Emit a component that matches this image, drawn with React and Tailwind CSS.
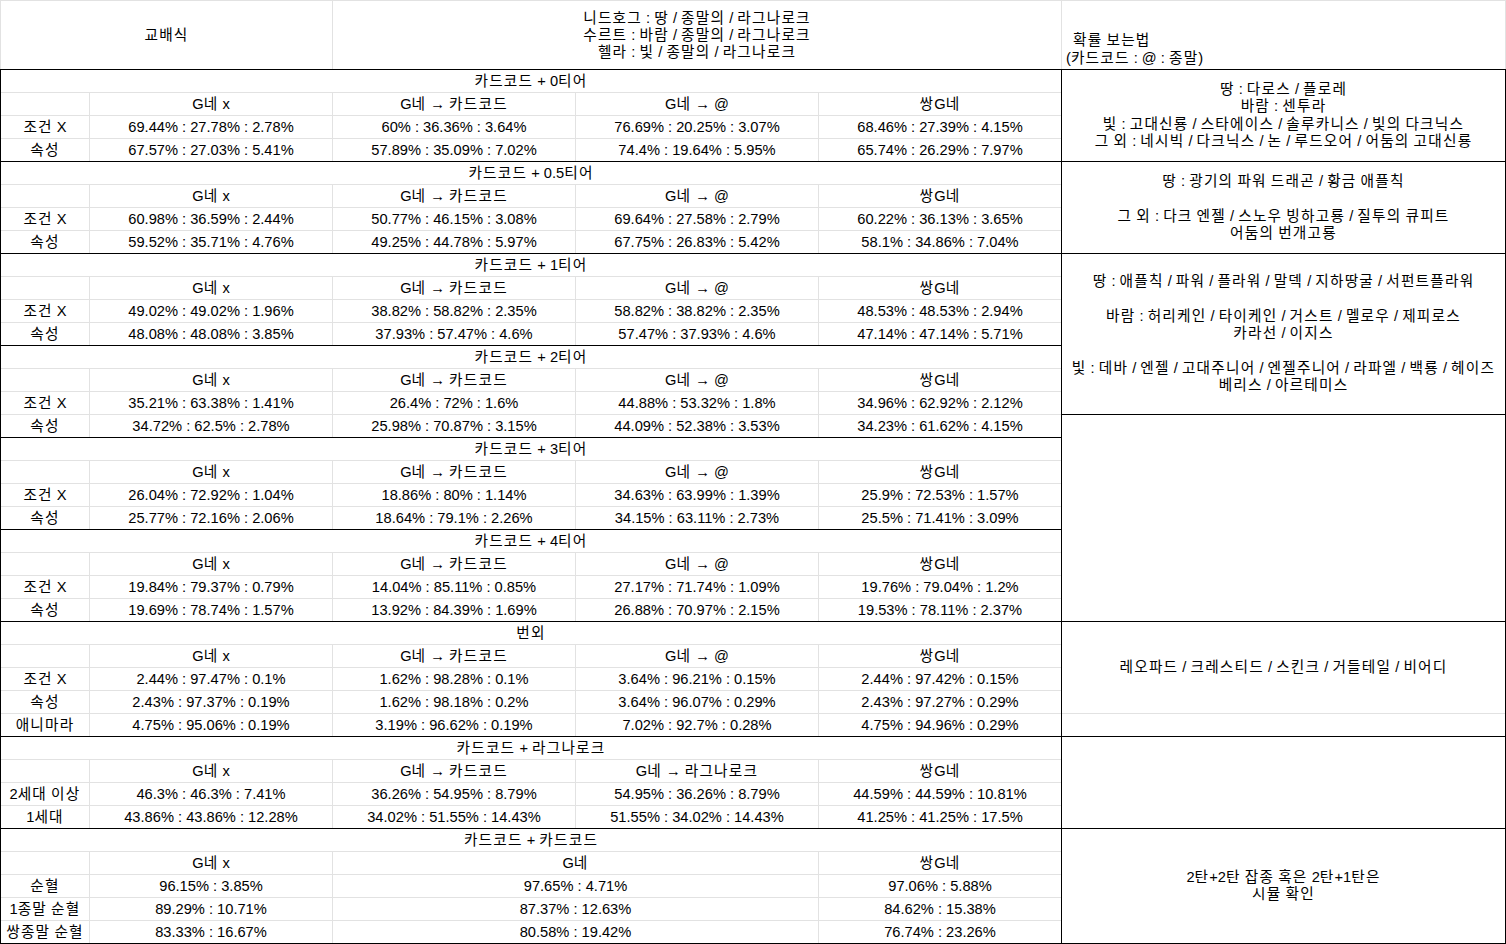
import React from "react";

const GRAY = "border-[#e2e2e2]";

function k(str) {
  if (typeof str !== "string") return str;
  const parts = str.split(/([\uAC00-\uD7A3]+)/);
  return (
    <span className="whitespace-pre">
      {parts.map((p, i) =>
        /[\uAC00-\uD7A3]/.test(p) ? (
          <span key={i} className="tracking-[1.2px]">{p}</span>
        ) : (
          <React.Fragment key={i}>{p}</React.Fragment>
        )
      )}
    </span>
  );
}

const H4 = [["G네 x", 1], ["G네 → 카드코드", 1], ["G네 → @", 1], ["쌍G네", 1]];

const sections = [
  {
    title: "카드코드 + 0티어",
    headers: H4,
    rows: [
      ["조건 X", ["69.44% : 27.78% : 2.78%", "60% : 36.36% : 3.64%", "76.69% : 20.25% : 3.07%", "68.46% : 27.39% : 4.15%"]],
      ["속성", ["67.57% : 27.03% : 5.41%", "57.89% : 35.09% : 7.02%", "74.4% : 19.64% : 5.95%", "65.74% : 26.29% : 7.97%"]],
    ],
  },
  {
    title: "카드코드 + 0.5티어",
    headers: H4,
    rows: [
      ["조건 X", ["60.98% : 36.59% : 2.44%", "50.77% : 46.15% : 3.08%", "69.64% : 27.58% : 2.79%", "60.22% : 36.13% : 3.65%"]],
      ["속성", ["59.52% : 35.71% : 4.76%", "49.25% : 44.78% : 5.97%", "67.75% : 26.83% : 5.42%", "58.1% : 34.86% : 7.04%"]],
    ],
  },
  {
    title: "카드코드 + 1티어",
    headers: H4,
    rows: [
      ["조건 X", ["49.02% : 49.02% : 1.96%", "38.82% : 58.82% : 2.35%", "58.82% : 38.82% : 2.35%", "48.53% : 48.53% : 2.94%"]],
      ["속성", ["48.08% : 48.08% : 3.85%", "37.93% : 57.47% : 4.6%", "57.47% : 37.93% : 4.6%", "47.14% : 47.14% : 5.71%"]],
    ],
  },
  {
    title: "카드코드 + 2티어",
    headers: H4,
    rows: [
      ["조건 X", ["35.21% : 63.38% : 1.41%", "26.4% : 72% : 1.6%", "44.88% : 53.32% : 1.8%", "34.96% : 62.92% : 2.12%"]],
      ["속성", ["34.72% : 62.5% : 2.78%", "25.98% : 70.87% : 3.15%", "44.09% : 52.38% : 3.53%", "34.23% : 61.62% : 4.15%"]],
    ],
  },
  {
    title: "카드코드 + 3티어",
    headers: H4,
    rows: [
      ["조건 X", ["26.04% : 72.92% : 1.04%", "18.86% : 80% : 1.14%", "34.63% : 63.99% : 1.39%", "25.9% : 72.53% : 1.57%"]],
      ["속성", ["25.77% : 72.16% : 2.06%", "18.64% : 79.1% : 2.26%", "34.15% : 63.11% : 2.73%", "25.5% : 71.41% : 3.09%"]],
    ],
  },
  {
    title: "카드코드 + 4티어",
    headers: H4,
    rows: [
      ["조건 X", ["19.84% : 79.37% : 0.79%", "14.04% : 85.11% : 0.85%", "27.17% : 71.74% : 1.09%", "19.76% : 79.04% : 1.2%"]],
      ["속성", ["19.69% : 78.74% : 1.57%", "13.92% : 84.39% : 1.69%", "26.88% : 70.97% : 2.15%", "19.53% : 78.11% : 2.37%"]],
    ],
  },
  {
    title: "번외",
    headers: H4,
    rows: [
      ["조건 X", ["2.44% : 97.47% : 0.1%", "1.62% : 98.28% : 0.1%", "3.64% : 96.21% : 0.15%", "2.44% : 97.42% : 0.15%"]],
      ["속성", ["2.43% : 97.37% : 0.19%", "1.62% : 98.18% : 0.2%", "3.64% : 96.07% : 0.29%", "2.43% : 97.27% : 0.29%"]],
      ["애니마라", ["4.75% : 95.06% : 0.19%", "3.19% : 96.62% : 0.19%", "7.02% : 92.7% : 0.28%", "4.75% : 94.96% : 0.29%"]],
    ],
  },
  {
    title: "카드코드 + 라그나로크",
    headers: [["G네 x", 1], ["G네 → 카드코드", 1], ["G네 → 라그나로크", 1], ["쌍G네", 1]],
    rows: [
      ["2세대 이상", ["46.3% : 46.3% : 7.41%", "36.26% : 54.95% : 8.79%", "54.95% : 36.26% : 8.79%", "44.59% : 44.59% : 10.81%"]],
      ["1세대", ["43.86% : 43.86% : 12.28%", "34.02% : 51.55% : 14.43%", "51.55% : 34.02% : 14.43%", "41.25% : 41.25% : 17.5%"]],
    ],
  },
  {
    title: "카드코드 + 카드코드",
    headers: [["G네 x", 1], ["G네", 2], ["쌍G네", 1]],
    spans: [1, 2, 1],
    rows: [
      ["순혈", ["96.15% : 3.85%", "97.65% : 4.71%", "97.06% : 5.88%"]],
      ["1종말 순혈", ["89.29% : 10.71%", "87.37% : 12.63%", "84.62% : 15.38%"]],
      ["쌍종말 순혈", ["83.33% : 16.67%", "80.58% : 19.42%", "76.74% : 23.26%"]],
    ],
  },
];

function Cell({ span = 1, first = false, children }) {
  const w = first ? "w-[88px]" : span === 2 ? "w-[486px] border-l" : "w-[243px] border-l";
  return (
    <div className={`${w} ${GRAY} h-full flex items-center justify-center whitespace-nowrap`}>
      {k(children)}
    </div>
  );
}

function Section({ s }) {
  const spans = s.spans || [1, 1, 1, 1];
  return (
    <div className="flex flex-col">
      <div className="h-[23px] border-t border-black flex items-center justify-center whitespace-nowrap">
        {k(s.title)}
      </div>
      <div className={`h-[23px] border-t ${GRAY} flex`}>
        <Cell first />
        {s.headers.map(([h, sp], i) => (
          <Cell key={i} span={sp}>{h}</Cell>
        ))}
      </div>
      {s.rows.map(([label, vals], r) => (
        <div key={r} className={`h-[23px] border-t ${GRAY} flex`}>
          <Cell first>{label}</Cell>
          {vals.map((v, i) => (
            <Cell key={i} span={spans[i]}>{v}</Cell>
          ))}
        </div>
      ))}
    </div>
  );
}

function RightCell({ h, top = "border-black", lines = [] }) {
  return (
    <div className={`${h} border-t ${top} flex flex-col items-center justify-center text-center leading-[17.3px] whitespace-nowrap`}>
      {lines.map((l, i) => (
        <div key={i}>{l ? k(l) : "\u00a0"}</div>
      ))}
    </div>
  );
}

export default function App() {
  return (
    <div className="w-[1506px] h-[944px] bg-white text-black text-[14.67px] font-['Liberation_Sans','Noto_Sans_CJK_KR',sans-serif] overflow-hidden">
      <div className={`h-[69px] flex border-t ${GRAY}`}>
        <div className={`w-[332px] border-l ${GRAY} flex items-center justify-center`}>{k("교배식")}</div>
        <div className={`w-[729px] border-l ${GRAY} flex flex-col items-center justify-center leading-[17px] pt-[1px]`}>
          <div>{k("니드호그 : 땅 / 종말의 / 라그나로크")}</div>
          <div>{k("수르트 : 바람 / 종말의 / 라그나로크")}</div>
          <div>{k("헬라 : 빛 / 종말의 / 라그나로크")}</div>
        </div>
        <div className={`w-[445px] border-l border-r ${GRAY} flex flex-col justify-end pb-[2px] pl-[4px] leading-[18px]`}>
          <div className="pl-[7px]">{k("확률 보는법")}</div>
          <div>{k("(카드코드 : @ : 종말)")}</div>
        </div>
      </div>
      <div className="flex border-b border-black">
        <div className="w-[1061px] border-l border-black flex flex-col">
          {sections.map((s, i) => (
            <Section key={i} s={s} />
          ))}
        </div>
        <div className="w-[445px] border-l border-r border-black flex flex-col">
          <RightCell
            h="h-[92px]"
            lines={[
              "땅 : 다로스 / 플로레",
              "바람 : 센투라",
              "빛 : 고대신룡 / 스타에이스 / 솔루카니스 / 빛의 다크닉스",
              "그 외 : 네시빅 / 다크닉스 / 논 / 루드오어 / 어둠의 고대신룡",
            ]}
          />
          <RightCell
            h="h-[92px]"
            lines={[
              "땅 : 광기의 파워 드래곤 / 황금 애플칙",
              "",
              "그 외 : 다크 엔젤 / 스노우 빙하고룡 / 질투의 큐피트",
              "어둠의 번개고룡",
            ]}
          />
          <RightCell
            h="h-[161px]"
            lines={[
              "땅 : 애플칙 / 파워 / 플라워 / 말덱 / 지하땅굴 / 서펀트플라워",
              "",
              "바람 : 허리케인 / 타이케인 / 거스트 / 멜로우 / 제피로스",
              "카라선 / 이지스",
              "",
              "빛 : 데바 / 엔젤 / 고대주니어 / 엔젤주니어 / 라파엘 / 백룡 / 헤이즈",
              "베리스 / 아르테미스",
            ]}
          />
          <RightCell h="h-[207px]" />
          <RightCell h="h-[92px]" lines={["레오파드 / 크레스티드 / 스킨크 / 거들테일 / 비어디"]} />
          <RightCell h="h-[23px]" top={GRAY} />
          <RightCell h="h-[92px]" />
          <RightCell h="h-[115px]" lines={["2탄+2탄 잡종 혹은 2탄+1탄은", "시뮬 확인"]} />
        </div>
      </div>
    </div>
  );
}
